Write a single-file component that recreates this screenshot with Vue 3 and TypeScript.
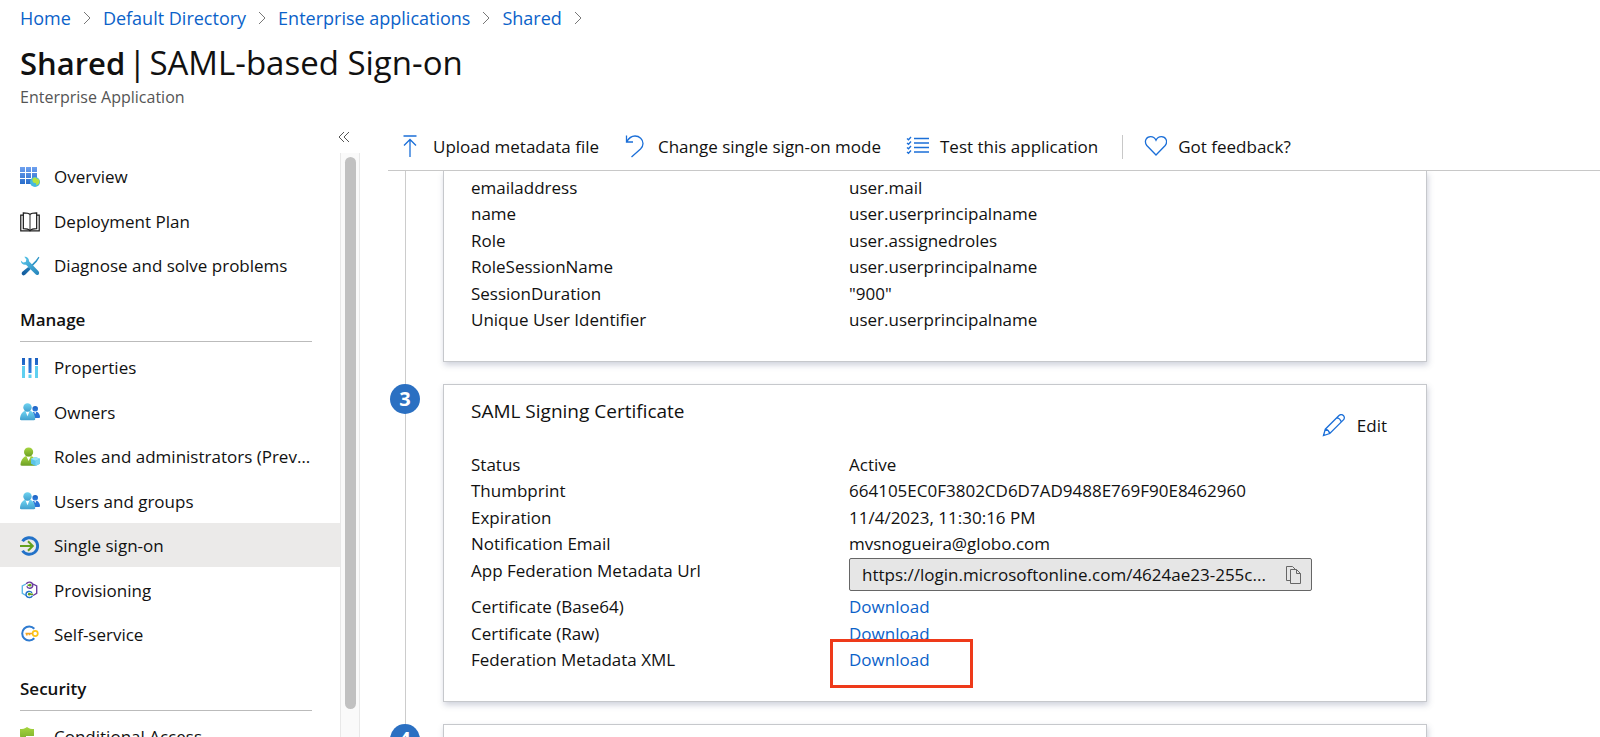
<script setup lang="ts">
interface NavItem {
  label: string
  icon: string
  active?: boolean
}
interface NavGroup {
  title?: string
  items: NavItem[]
}

const breadcrumbs: string[] = ['Home', 'Default Directory', 'Enterprise applications', 'Shared']

const groups: NavGroup[] = [
  {
    items: [
      { label: 'Overview', icon: 'overview' },
      { label: 'Deployment Plan', icon: 'book' },
      { label: 'Diagnose and solve problems', icon: 'tools' },
    ],
  },
  {
    title: 'Manage',
    items: [
      { label: 'Properties', icon: 'sliders' },
      { label: 'Owners', icon: 'people' },
      { label: 'Roles and administrators (Preview)', icon: 'role' },
      { label: 'Users and groups', icon: 'people' },
      { label: 'Single sign-on', icon: 'sso', active: true },
      { label: 'Provisioning', icon: 'provisioning' },
      { label: 'Self-service', icon: 'selfservice' },
    ],
  },
  {
    title: 'Security',
    items: [{ label: 'Conditional Access', icon: 'shield' }],
  },
]

const claims: [string, string][] = [
  ['emailaddress', 'user.mail'],
  ['name', 'user.userprincipalname'],
  ['Role', 'user.assignedroles'],
  ['RoleSessionName', 'user.userprincipalname'],
  ['SessionDuration', '"900"'],
  ['Unique User Identifier', 'user.userprincipalname'],
]

const certificate: [string, string][] = [
  ['Status', 'Active'],
  ['Thumbprint', '664105EC0F3802CD6D7AD9488E769F90E8462960'],
  ['Expiration', '11/4/2023, 11:30:16 PM'],
  ['Notification Email', 'mvsnogueira@globo.com'],
]

const downloads: { label: string; marked?: boolean }[] = [
  { label: 'Certificate (Base64)' },
  { label: 'Certificate (Raw)' },
  { label: 'Federation Metadata XML', marked: true },
]

const metadataUrl = 'https://login.microsoftonline.com/4624ae23-255c...'
</script>

<template>
  <div class="page">
    <svg class="sprite" width="0" height="0" aria-hidden="true">
      <defs>
        <linearGradient id="g-grid" x1="0" y1="0" x2="0" y2="20" gradientUnits="userSpaceOnUse">
          <stop offset="0" stop-color="#6ea0ef" /><stop offset="1" stop-color="#1c64c4" />
        </linearGradient>
        <linearGradient id="g-cyan" x1="0" y1="0" x2="0" y2="1">
          <stop offset="0" stop-color="#6fd3f0" /><stop offset="1" stop-color="#41a0cf" />
        </linearGradient>
        <linearGradient id="g-blue" x1="0" y1="0" x2="0" y2="1">
          <stop offset="0" stop-color="#1a5fc0" /><stop offset="1" stop-color="#2f7fe0" />
        </linearGradient>
        <linearGradient id="g-green" x1="0" y1="0" x2="0" y2="1">
          <stop offset="0" stop-color="#a6d63f" /><stop offset="1" stop-color="#6d9f25" />
        </linearGradient>
        <linearGradient id="g-tool" x1="0" y1="0" x2="20" y2="20" gradientUnits="userSpaceOnUse">
          <stop offset="0" stop-color="#5fcdee" /><stop offset="1" stop-color="#2380b8" />
        </linearGradient>
        <linearGradient id="g-tool2" x1="20" y1="0" x2="0" y2="20" gradientUnits="userSpaceOnUse">
          <stop offset="0" stop-color="#3fb0dc" /><stop offset="1" stop-color="#0c4f95" />
        </linearGradient>
      </defs>
      <symbol id="overview" viewBox="0 0 20 20">
        <path fill="url(#g-grid)" d="M0 0h5v5H0zM6 0h5v5H6zM12 0h5v5h-5zM0 6h5v5H0zM6 6h5v5H6zM12 6h5v5h-5zM0 12h5v5H0zM6 12h5v5H6zM12 12h5v5h-5z" />
        <circle cx="15" cy="15" r="5" fill="#45b8e0" />
        <path fill="#b5e33f" d="M12.500 11.500q2-1.500 3.500-.8.500 1.300 2 1 1.700 1 1.500 3.300-.5 2.600-3 3.600-.6-1-.3-2.200-1-.5-2.600-.6-1.700-1-1.100-4.300z" />
      </symbol>
      <symbol id="book" viewBox="0 0 21 21">
        <g fill="none" stroke="#1f1f1f" stroke-width="1.300">
          <path d="M3.500 3.200H.8v16.600h19.400V3.200h-2.700" />
          <path d="M10.500 2.500C9 1 6.200.8 3.500.8v16.600c2.700 0 5.500.3 7 2.200 1.500-1.900 4.300-2.200 7-2.200V.8c-2.700 0-5.500.2-7 1.700z" />
          <path d="M10.500 2.500v17" stroke-width="1" />
        </g>
      </symbol>
      <symbol id="tools" viewBox="0 0 20 20">
        <path d="M18.500.8l.9.8-2.600 4.200-8 8.300-1.300-1.300 8.200-8.200z" fill="#2c93c6" />
        <path d="M8.200 11l2.400 2.300-5.200 5.300c-1 1-2.300 1-3.200.2-.8-.9-.7-2.100.2-3z" fill="url(#g-tool2)" />
        <path d="M4.300.7c2.400-.5 4.900 1.600 4.700 4.600l9.300 9.700c1.200 1.300 1 2.600.3 3.400-.9.800-2.200.8-3.300-.3L6 8.700c-2.500.5-5-.9-5.200-4.200l2.400 2.100 2.500-.7.700-2.500z" fill="url(#g-tool)" />
      </symbol>
      <symbol id="sliders" viewBox="0 0 20 20">
        <path fill="url(#g-blue)" d="M2 0h3v7H2zM8.500 0h3v15h-3zM15 0h3v7h-3z" />
        <path fill="#5fd0f0" d="M2 8h3v12H2zM15 8h3v12h-3zM8.500 16.500h3V20h-3z" />
      </symbol>
      <symbol id="people" viewBox="0 0 20 20">
        <circle cx="15.200" cy="5.800" r="2.800" fill="url(#g-blue)" />
        <path d="M13 9h4.500c1.500 1 2.500 3 2.500 5 0 .6-.3.900-1 .9h-5z" fill="#2a72d4" />
        <path d="M14.200 8.800h2l-1 2.500z" fill="#fff" />
        <path d="M4.500 8h6.300c2.500 1 4.400 4.600 4.400 8 0 .8-.4 1.200-1.200 1.200H1.200C.4 17.200 0 16.800 0 16c0-3.400 2-7 4.500-8z" fill="url(#g-cyan)" />
        <path d="M5.500 8.200h4l-2 5z" fill="#fff" />
        <circle cx="7.500" cy="4.500" r="4.200" fill="url(#g-cyan)" />
      </symbol>
      <symbol id="role" viewBox="0 0 20 20">
        <path d="M5.500 9.300h6.300c2.500 1 4 5 4 8.200 0 .8-.4 1.200-1.200 1.200H1.700c-.8 0-1.200-.4-1.200-1.200 0-3.300 2.500-7.200 5-8.200z" fill="url(#g-green)" />
        <path d="M6.500 9.500h4.200L8.600 14z" fill="#fff" />
        <circle cx="8.600" cy="5" r="4.600" fill="url(#g-green)" />
        <path d="M15.500 10l4.500 1.700v5L15.500 19 11 16.700v-5z" fill="#5cc4e8" />
        <path d="M15.500 10l4.500 1.700-4.500 2-4.500-2z" fill="#9be3f7" />
        <path d="M15.500 13.700l4.500-2v5L15.500 19z" fill="#79d3f0" />
      </symbol>
      <symbol id="sso" viewBox="0 0 20 20">
        <path d="M2.500 5.300A8.300 8.300 0 1 1 2.500 14.700" fill="none" stroke="#2372c8" stroke-width="2.900" />
        <path d="M0 10h12.500M8 5.200L12.800 10 8 14.800" fill="none" stroke="#63a01c" stroke-width="2" />
      </symbol>
      <symbol id="provisioning" viewBox="0 0 20 20">
        <g fill="none" stroke-width="1.400">
          <path d="M6 3L2.300 5v7.300L6 14.500" stroke="#5db7e8" />
          <path d="M6.500 3C6.500.5 12.500.1 12.800 4.100c0 3.800-5 4.200-6 1.200M13 3l3.700 2v7.300L13 14.500" stroke="#6b3fa0" />
          <path d="M12 11.800c-1.600-2.600-6-1.400-6 1.600s4.600 4.600 6.500 1.300" stroke="#2372c8" />
        </g>
        <path d="M7.500 4.200h3M9 13.200h4" stroke="#63a01c" stroke-width="1.600" />
        <circle cx="10" cy="4.200" r="1.400" fill="#63a01c" /><circle cx="9.300" cy="13.200" r="1.400" fill="#63a01c" />
      </symbol>
      <symbol id="selfservice" viewBox="0 0 20 20">
        <path d="M14.300 3.700A7 7 0 1 0 14.300 13.300" fill="none" stroke="#2f7bd0" stroke-width="2" />
        <circle cx="15.200" cy="8.500" r="2.600" fill="none" stroke="#fcc419" stroke-width="1.700" />
        <path d="M12.500 8.500H5.500M6.800 8.500v2M9.500 8.500v1.800" stroke="#f5a623" stroke-width="1.700" fill="none" />
      </symbol>
      <symbol id="shield" viewBox="0 0 20 20">
        <path d="M7 0c2 1.700 4.500 2 7 2v6c0 5-3.500 7.500-7 9-3.500-1.500-7-4-7-9V2c2.500 0 5-.3 7-2z" fill="url(#g-green)" />
        <path d="M6 9h14v11H6z" fill="#fff" /><path d="M7 10h13v2H7zM7 14h13v2H7z" fill="#1f74d0" />
      </symbol>
      <symbol id="chevron" viewBox="0 0 8 14"><path d="M1 1l6 6-6 6" fill="none" stroke="#777" /></symbol>
      <symbol id="collapse" viewBox="0 0 12 12"><path d="M6 1L1 6l5 5M11 1L6 6l5 5" fill="none" stroke="#555" /></symbol>
      <symbol id="upload" viewBox="0 0 24 24">
        <path d="M5.500 1h13M12 4.500V22M6 10.500l6-6 6 6" fill="none" stroke="#1b6fd8" stroke-width="1.300" />
      </symbol>
      <symbol id="undo" viewBox="0 0 24 24">
        <path d="M3.500.5V7H10M3.500 7C5.500 3.500 8.500 1 12 1c4.500 0 8 3.500 8 7.500 0 2.500-1 4-2.500 5.500L8.500 22" fill="none" stroke="#1b6fd8" stroke-width="1.300" />
      </symbol>
      <symbol id="checklist" viewBox="0 0 24 24">
        <path d="M9 3.500h15M9 8h15M9 12.500h15M9 17h15M2 3.500l1.500 1.300L6 2M2 8l1.500 1.300L6 6.500M2 12.500l1.500 1.300L6 11M2 17l1.500 1.300L6 15.500" fill="none" stroke="#1b6fd8" stroke-width="1.300" />
      </symbol>
      <symbol id="heart" viewBox="0 0 24 24">
        <path d="M13 20L3.800 10.500C.8 6.500 3.200 1.600 7.600 1.600c2.500 0 4.300 1.300 5.400 3.600 1.100-2.300 2.900-3.600 5.400-3.600 4.400 0 6.800 4.900 3.800 8.900z" fill="none" stroke="#1b6fd8" stroke-width="1.300" />
      </symbol>
      <symbol id="pencil" viewBox="0 0 24 24">
        <path d="M1.500 21.500l1.800-6.300L17 1.500c1.500-1.400 3.300-1 4.400 0 1.100 1.100 1.400 3 0 4.400L7.800 19.500zM3.300 15.200c2 .4 3.800 2 4.500 4.300M15 3.500c2 .6 3.600 2.200 4.400 4.500" fill="none" stroke="#1b6fd8" stroke-width="1.300" />
      </symbol>
      <symbol id="copy" viewBox="0 0 16 18">
        <path d="M4.500 14.500h-4V.5h6l3 3M4.500 3.500h6l4 4v10h-10zM10.500 3.500v4h4" fill="none" stroke="#666" />
      </symbol>
    </svg>

    <header class="header">
      <nav aria-label="Breadcrumb">
        <ol class="crumbs">
          <li v-for="crumb in breadcrumbs" :key="crumb">
            <a href="#">{{ crumb }}</a>
            <svg class="chevron" aria-hidden="true"><use href="#chevron" /></svg>
          </li>
        </ol>
      </nav>
      <h1><strong>Shared</strong><span>|</span><span>SAML-based Sign-on</span></h1>
      <p class="subtitle">Enterprise Application</p>
    </header>

    <div class="body">
      <aside class="sidebar">
        <div class="collapse-bar">
          <button type="button" class="collapse" aria-label="Collapse menu">
            <svg aria-hidden="true"><use href="#collapse" /></svg>
          </button>
        </div>
        <div class="scroll-area">
          <nav class="menu" aria-label="Application">
            <section v-for="(group, index) in groups" :key="index">
              <h2 v-if="group.title">{{ group.title }}</h2>
              <ul>
                <li v-for="item in group.items" :key="item.label">
                  <a href="#" class="menu-link" :class="{ active: item.active }">
                    <svg aria-hidden="true"><use :href="'#' + item.icon" /></svg>
                    <span>{{ item.label }}</span>
                  </a>
                </li>
              </ul>
            </section>
          </nav>
          <div class="track"><div class="thumb"></div></div>
        </div>
      </aside>

      <main class="main">
        <div class="toolbar" role="toolbar" aria-label="Commands">
          <button type="button"><svg aria-hidden="true"><use href="#upload" /></svg>Upload metadata file</button>
          <button type="button"><svg aria-hidden="true"><use href="#undo" /></svg>Change single sign-on mode</button>
          <button type="button"><svg aria-hidden="true"><use href="#checklist" /></svg>Test this application</button>
          <span class="divider"></span>
          <button type="button"><svg aria-hidden="true"><use href="#heart" /></svg>Got feedback?</button>
        </div>

        <div class="steps">
          <div class="step">
            <div class="rail"></div>
            <section class="card card-clipped">
              <table>
                <tbody>
                  <tr v-for="[name, value] in claims" :key="name">
                    <th scope="row">{{ name }}</th>
                    <td>{{ value }}</td>
                  </tr>
                </tbody>
              </table>
            </section>
          </div>

          <div class="step">
            <div class="rail"><span class="badge">3</span></div>
            <section class="card">
              <div class="card-head">
                <h3>SAML Signing Certificate</h3>
                <button type="button" class="edit">
                  <svg aria-hidden="true"><use href="#pencil" /></svg>Edit
                </button>
              </div>
              <table>
                <tbody>
                  <tr v-for="[name, value] in certificate" :key="name">
                    <th scope="row">{{ name }}</th>
                    <td>{{ value }}</td>
                  </tr>
                  <tr>
                    <th scope="row"><label for="metadata-url">App Federation Metadata Url</label></th>
                    <td>
                      <div class="url-box">
                        <input id="metadata-url" type="text" readonly :value="metadataUrl" />
                        <button type="button" aria-label="Copy to clipboard">
                          <svg aria-hidden="true"><use href="#copy" /></svg>
                        </button>
                      </div>
                    </td>
                  </tr>
                  <tr v-for="row in downloads" :key="row.label">
                    <th scope="row">{{ row.label }}</th>
                    <td>
                      <span class="download">
                        <a href="#">Download</a>
                        <span v-if="row.marked" class="marker"></span>
                      </span>
                    </td>
                  </tr>
                </tbody>
              </table>
            </section>
          </div>

          <div class="step">
            <div class="rail"><span class="badge">4</span></div>
            <section class="card"></section>
          </div>
        </div>
      </main>
    </div>
  </div>
</template>

<style>
body {
  margin: 0;
  background: #fff;
}
</style>

<style scoped>
.page {
  display: flex;
  flex-direction: column;
  height: 100vh;
  overflow: hidden;
  color: #111;
  font-family: 'Segoe UI', 'Open Sans', 'Noto Sans', sans-serif;
  font-size: 17px;
  line-height: 26px;
}
.page * {
  box-sizing: border-box;
}
.sprite {
  display: block;
}
a {
  color: #0b62c9;
  text-decoration: none;
}
button {
  padding: 0;
  border: 0;
  background: none;
  color: inherit;
  font: inherit;
  cursor: pointer;
}
ul,
ol {
  margin: 0;
  padding: 0;
  list-style: none;
}

.header {
  padding: 4px 20px 0;
}
.crumbs {
  display: flex;
  line-height: 28px;
  font-size: 18px;
}
.crumbs li {
  display: flex;
  align-items: center;
}
.chevron {
  width: 8px;
  height: 14px;
  margin: 0 12px;
}
h1 {
  display: flex;
  align-items: baseline;
  gap: 3px;
  margin: 7px 0 0;
  font-size: 33px;
  font-weight: 400;
  line-height: 48px;
}
h1 strong {
  font-size: 31px;
  font-weight: 600;
}
.subtitle {
  margin: 0;
  color: #555;
  font-size: 16px;
  line-height: 20px;
}

.body {
  display: flex;
  flex: 1;
  min-height: 0;
}
.sidebar {
  display: flex;
  flex: 0 0 360px;
  flex-direction: column;
  min-width: 0;
}
.collapse-bar {
  display: flex;
  justify-content: flex-end;
  padding: 17px 10px 4px;
}
.collapse {
  display: flex;
  align-items: center;
  height: 25px;
}
.collapse svg {
  width: 12px;
  height: 12px;
}
.scroll-area {
  display: flex;
  flex: 1;
  min-height: 0;
}
.menu {
  flex: 1;
  min-width: 0;
  overflow: hidden;
  padding-top: 1px;
}
.menu li:nth-child(even) {
  margin-top: 1px;
}
.menu-link {
  display: flex;
  align-items: center;
  gap: 14px;
  height: 44px;
  padding: 2px 26px 0 20px;
  color: inherit;
}
.menu-link.active {
  background: #ebeae9;
}
.menu-link svg {
  flex: none;
  width: 20px;
  height: 20px;
}
.menu-link span {
  overflow: hidden;
  text-overflow: ellipsis;
  white-space: nowrap;
}
.menu h2 {
  margin: 16px 28px 3px 20px;
  padding: 4px 0 8px;
  border-bottom: 1px solid #bbb;
  font-size: 17px;
  font-weight: 600;
  line-height: 26px;
}
.track {
  width: 20px;
  padding: 4px;
  border: solid #e8e8e8;
  border-width: 0 1px;
  background: #fafafa;
}
.thumb {
  width: 11px;
  height: 552px;
  border-radius: 6px;
  background: #c1c1c1;
}

.main {
  display: flex;
  flex: 1;
  flex-direction: column;
  min-width: 0;
  padding-left: 28px;
}
.toolbar {
  display: flex;
  flex: none;
  align-items: center;
  height: 64px;
  padding: 16px 10px 0;
  border-bottom: 1px solid #c8c8c8;
}
.toolbar button {
  display: flex;
  align-items: center;
  gap: 11px;
  margin-right: 24px;
  white-space: nowrap;
}
.toolbar svg,
.edit svg {
  width: 24px;
  height: 24px;
}
.divider {
  width: 1px;
  height: 24px;
  margin-right: 20px;
  background: #c8c8c8;
}

.steps {
  flex: 1;
  min-height: 0;
  overflow: hidden;
}
.step {
  display: flex;
}
.rail {
  flex: 0 0 36px;
  margin-right: 19px;
  background: linear-gradient(#ccc, #ccc) 17px 0 / 1px 100% no-repeat;
}
.badge {
  display: block;
  width: 30px;
  height: 30px;
  margin-left: 2px;
  border-radius: 50%;
  background: #2b70c2;
  color: #fff;
  font-size: 20px;
  font-weight: 700;
  line-height: 30px;
  text-align: center;
}
.card {
  flex: 1;
  max-width: 984px;
  min-height: 60px;
  margin-bottom: 22px;
  padding: 12px 27px 27px;
  border: 1px solid #c6c8cc;
  box-shadow: 1px 3px 6px rgba(60, 70, 110, 0.25);
}
.card-clipped {
  padding-top: 4px;
  border-top: 0;
}
.card-head {
  display: flex;
  justify-content: space-between;
  margin-bottom: 13px;
}
h3 {
  margin: 0;
  font-size: 19px;
  font-weight: 400;
  line-height: 28px;
}
.edit {
  display: flex;
  align-items: center;
  gap: 11px;
  margin: 16px 12px 0 0;
}
table {
  width: 100%;
  border-collapse: collapse;
  table-layout: fixed;
}
th,
td {
  padding: 0;
  font-weight: 400;
  text-align: left;
  vertical-align: top;
}
tr:nth-child(even) th,
tr:nth-child(even) td {
  padding-bottom: 1px;
}
th {
  width: 378px;
}
.url-box {
  display: flex;
  align-items: center;
  max-width: 463px;
  height: 33px;
  margin-bottom: 3px;
  padding: 0 9px 0 12px;
  border: 1px solid #666;
  border-radius: 2px;
  background: #e6e6e6;
}
.url-box input {
  flex: 1;
  min-width: 0;
  padding: 0;
  border: 0;
  outline: 0;
  background: none;
  color: inherit;
  font: inherit;
  text-overflow: ellipsis;
}
.url-box svg {
  display: block;
  width: 16px;
  height: 18px;
}
.download {
  position: relative;
}
.marker {
  position: absolute;
  top: -9px;
  left: -19px;
  width: 143px;
  height: 49px;
  border: 3px solid #ee3a1a;
  pointer-events: none;
}
</style>
